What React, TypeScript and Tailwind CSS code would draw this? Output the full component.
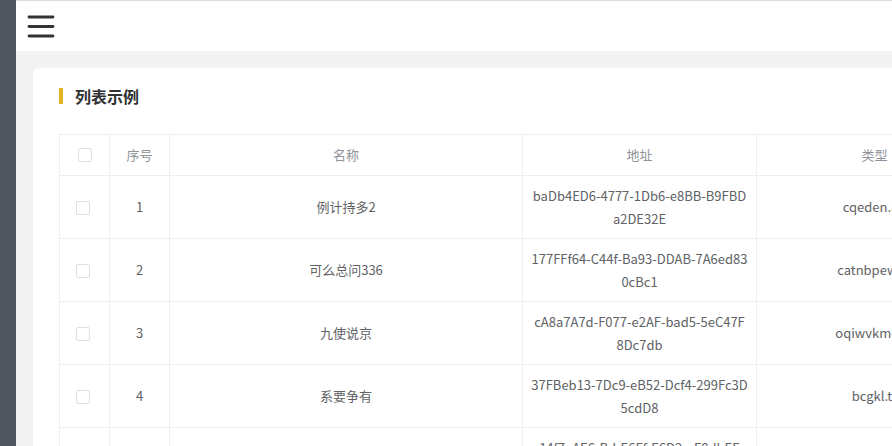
import React from "react";

type Row = { id: number; name: string; addr: [string, string]; type: string };

const rows: Row[] = [
  { id: 1, name: "例计持多2", addr: ["baDb4ED6-4777-1Db6-e8BB-B9FBD", "a2DE32E"], type: "cqeden.au" },
  { id: 2, name: "可么总问336", addr: ["177FFf64-C44f-Ba93-DDAB-7A6ed83", "0cBc1"], type: "catnbpew.io" },
  { id: 3, name: "九使说京", addr: ["cA8a7A7d-F077-e2AF-bad5-5eC47F", "8Dc7db"], type: "oqiwvkmo.tv" },
  { id: 4, name: "系要争有", addr: ["37FBeb13-7Dc9-eB52-Dcf4-299Fc3D", "5cdD8"], type: "bcgkl.tr" },
  { id: 5, name: "白提领", addr: ["14f7eAE6-Bd-E6Ff-E6D2-aF8dbEE", "3cA1"], type: "hdqcr.gov" },
];

function Checkbox() {
  return <span className="inline-block w-[14px] h-[14px] border border-[#dcdfe6] rounded-[2px] bg-white" />;
}

export default function App() {
  return (
    <div className="w-[892px] h-[446px] overflow-hidden flex font-['Noto_Sans_CJK_SC','Noto_Sans',sans-serif]">
      <div className="w-[16px] shrink-0 bg-[#50565e]" />
      <div className="flex-1 flex flex-col min-w-0">
        <header className="h-[51px] shrink-0 bg-white border-t border-[#dcdcdc] flex items-center pl-[11px]">
          <svg width="28" height="24" viewBox="0 0 28 24" className="text-[#333]">
            <line x1="2" y1="3" x2="26" y2="3" stroke="currentColor" strokeWidth="2.8" strokeLinecap="round" />
            <line x1="2" y1="12.5" x2="26" y2="12.5" stroke="currentColor" strokeWidth="2.8" strokeLinecap="round" />
            <line x1="2" y1="22" x2="26" y2="22" stroke="currentColor" strokeWidth="2.8" strokeLinecap="round" />
          </svg>
        </header>
        <main className="flex-1 bg-[#f3f3f3] pl-[17px] pt-[17px]">
          <div className="w-[1050px] bg-white rounded-[6px] pl-[26px] pt-[16px] pb-[20px]">
            <div className="h-[24px] flex items-center">
              <span className="w-[4px] h-[16px] bg-[#e6b422]" />
              <span className="ml-[12px] text-[16px] font-semibold text-[#303133] leading-[24px]">列表示例</span>
            </div>
            <table className="mt-[26px] table-fixed border-collapse text-[13px] w-[933px]">
              <colgroup>
                <col className="w-[50px]" />
                <col className="w-[60px]" />
                <col className="w-[353px]" />
                <col className="w-[234px]" />
                <col className="w-[236px]" />
              </colgroup>
              <thead>
                <tr className="h-[41px] text-[#909399]">
                  <th className="border border-[#ebeef5] font-normal p-0">
                    <div className="flex justify-center pl-[1px]">
                      <Checkbox />
                    </div>
                  </th>
                  <th className="border border-[#ebeef5] font-normal">序号</th>
                  <th className="border border-[#ebeef5] font-normal">名称</th>
                  <th className="border border-[#ebeef5] font-normal">地址</th>
                  <th className="border border-[#ebeef5] font-normal">类型</th>
                </tr>
              </thead>
              <tbody className="text-[#606266]">
                {rows.map((r) => (
                  <tr key={r.id} className="h-[63px]">
                    <td className="border border-[#ebeef5] p-0">
                      <div className="flex justify-center pr-[3px] pt-[1px]">
                        <Checkbox />
                      </div>
                    </td>
                    <td className="border border-[#ebeef5] text-center">{r.id}</td>
                    <td className="border border-[#ebeef5] text-center">{r.name}</td>
                    <td className="border border-[#ebeef5] text-center leading-[23px]">
                      {r.addr[0]}
                      <br />
                      {r.addr[1]}
                    </td>
                    <td className="border border-[#ebeef5] text-center">{r.type}</td>
                  </tr>
                ))}
              </tbody>
            </table>
          </div>
        </main>
      </div>
    </div>
  );
}
